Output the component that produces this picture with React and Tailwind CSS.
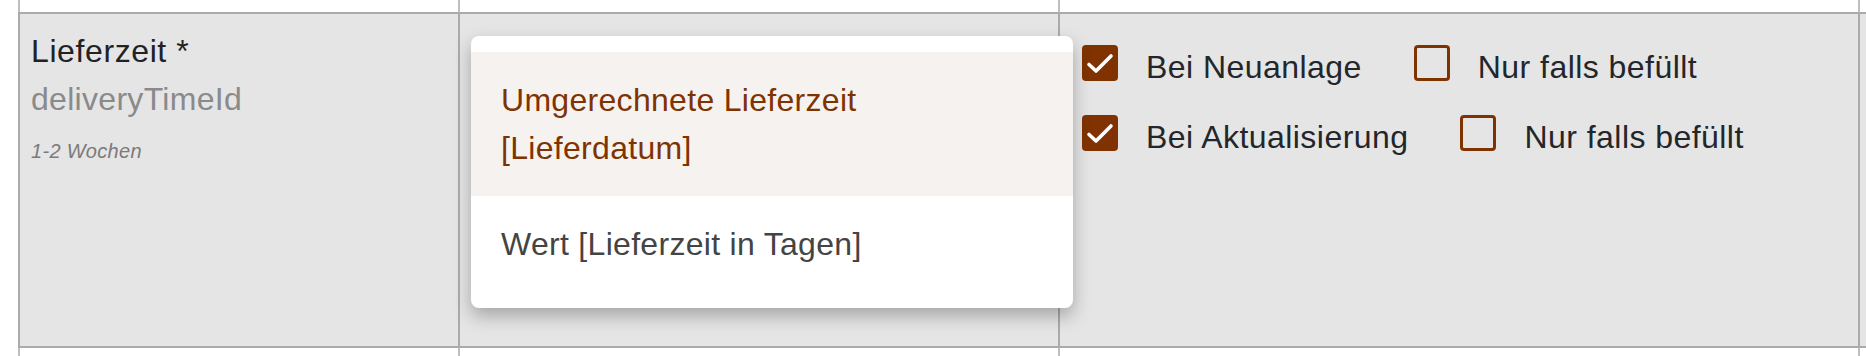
import React from 'react';

const font = { fontFamily: '"Liberation Sans", Arial, sans-serif' };

function Check({ checked }) {
  if (checked) {
    return (
      <span className="mt-[2px] flex h-[36px] w-[36px] shrink-0 items-center justify-center rounded-[4px] bg-[#803300]">
        <svg width="36" height="36" viewBox="0 0 36 36">
          <path d="M7 19.5 L14 26 L29 11" fill="none" stroke="#fff" strokeWidth="3.6" strokeLinecap="round" strokeLinejoin="round" />
        </svg>
      </span>
    );
  }
  return <span className="mt-[2px] block h-[36px] w-[36px] shrink-0 rounded-[4px] border-[3px] border-[#803300]" />;
}

function CheckRow({ label }) {
  return (
    <div className="flex h-[48px] items-start">
      <Check checked />
      <span className="ml-[28px] text-[32px] leading-[48px] tracking-[0.45px] text-[#23262a]">{label}</span>
      <span className="ml-[52px] flex items-start">
        <Check checked={false} />
      </span>
      <span className="ml-[28px] text-[32px] leading-[48px] tracking-[0.45px] text-[#23262a]">Nur falls befüllt</span>
    </div>
  );
}

export default function App() {
  const line = 'border-[rgba(0,0,0,0.25)]';
  return (
    <div className="relative h-[356px] w-[1866px] overflow-hidden bg-white" style={font}>
      {/* vorherige Zeile */}
      <div className="ml-[18px] grid h-[12px] grid-cols-[440px_600px_802px]">
        <div className={`border-l-2 ${line}`} />
        <div className={`border-l-2 ${line}`} />
        <div className={`border-l-2 border-r-2 ${line}`} />
      </div>

      {/* aktuelle Zeile */}
      <div className={`ml-[18px] grid h-[336px] grid-cols-[440px_600px_802px] border-y-2 ${line} bg-[#e5e5e5]`}>
        <div className={`border-l-2 ${line} pl-[11px] pt-[13px] tracking-[0.35px]`}>
          <div className="text-[32px] leading-[48px] tracking-[0.6px] text-[#222]">Lieferzeit *</div>
          <div className="text-[32px] leading-[48px] tracking-[0.3px] text-[#8a8a8a]">deliveryTimeId</div>
          <div className="mt-[13px] text-[20px] italic leading-[30px] tracking-[0.3px] text-[#7a7a7a]">1-2 Wochen</div>
        </div>
        <div className={`border-l-2 ${line}`} />
        <div className={`border-l-2 border-r-2 ${line} pl-[22px] pt-[29px]`}>
          <div className="flex flex-col gap-[22px]">
            <CheckRow label="Bei Neuanlage" />
            <CheckRow label="Bei Aktualisierung" />
          </div>
        </div>
      </div>

      {/* nächste Zeile */}
      <div className="ml-[18px] grid h-[8px] grid-cols-[440px_600px_802px]">
        <div className={`border-l-2 ${line}`} />
        <div className={`border-l-2 ${line}`} />
        <div className={`border-l-2 border-r-2 ${line}`} />
      </div>

      {/* Dropdown-Menü */}
      <div className="absolute left-[471px] top-[36px] w-[602px] rounded-lg bg-white py-4 tracking-[0.3px] shadow-[0_8px_18px_rgba(0,0,0,0.28)]">
        <div className="bg-[#f5f2ef] px-[30px] py-6 text-[32px] leading-[48px] text-[#803300]">
          Umgerechnete Lieferzeit
          <br />
          [Lieferdatum]
        </div>
        <div className="px-[30px] py-6 text-[32px] leading-[48px] text-[#444]">Wert [Lieferzeit in Tagen]</div>
      </div>
    </div>
  );
}
